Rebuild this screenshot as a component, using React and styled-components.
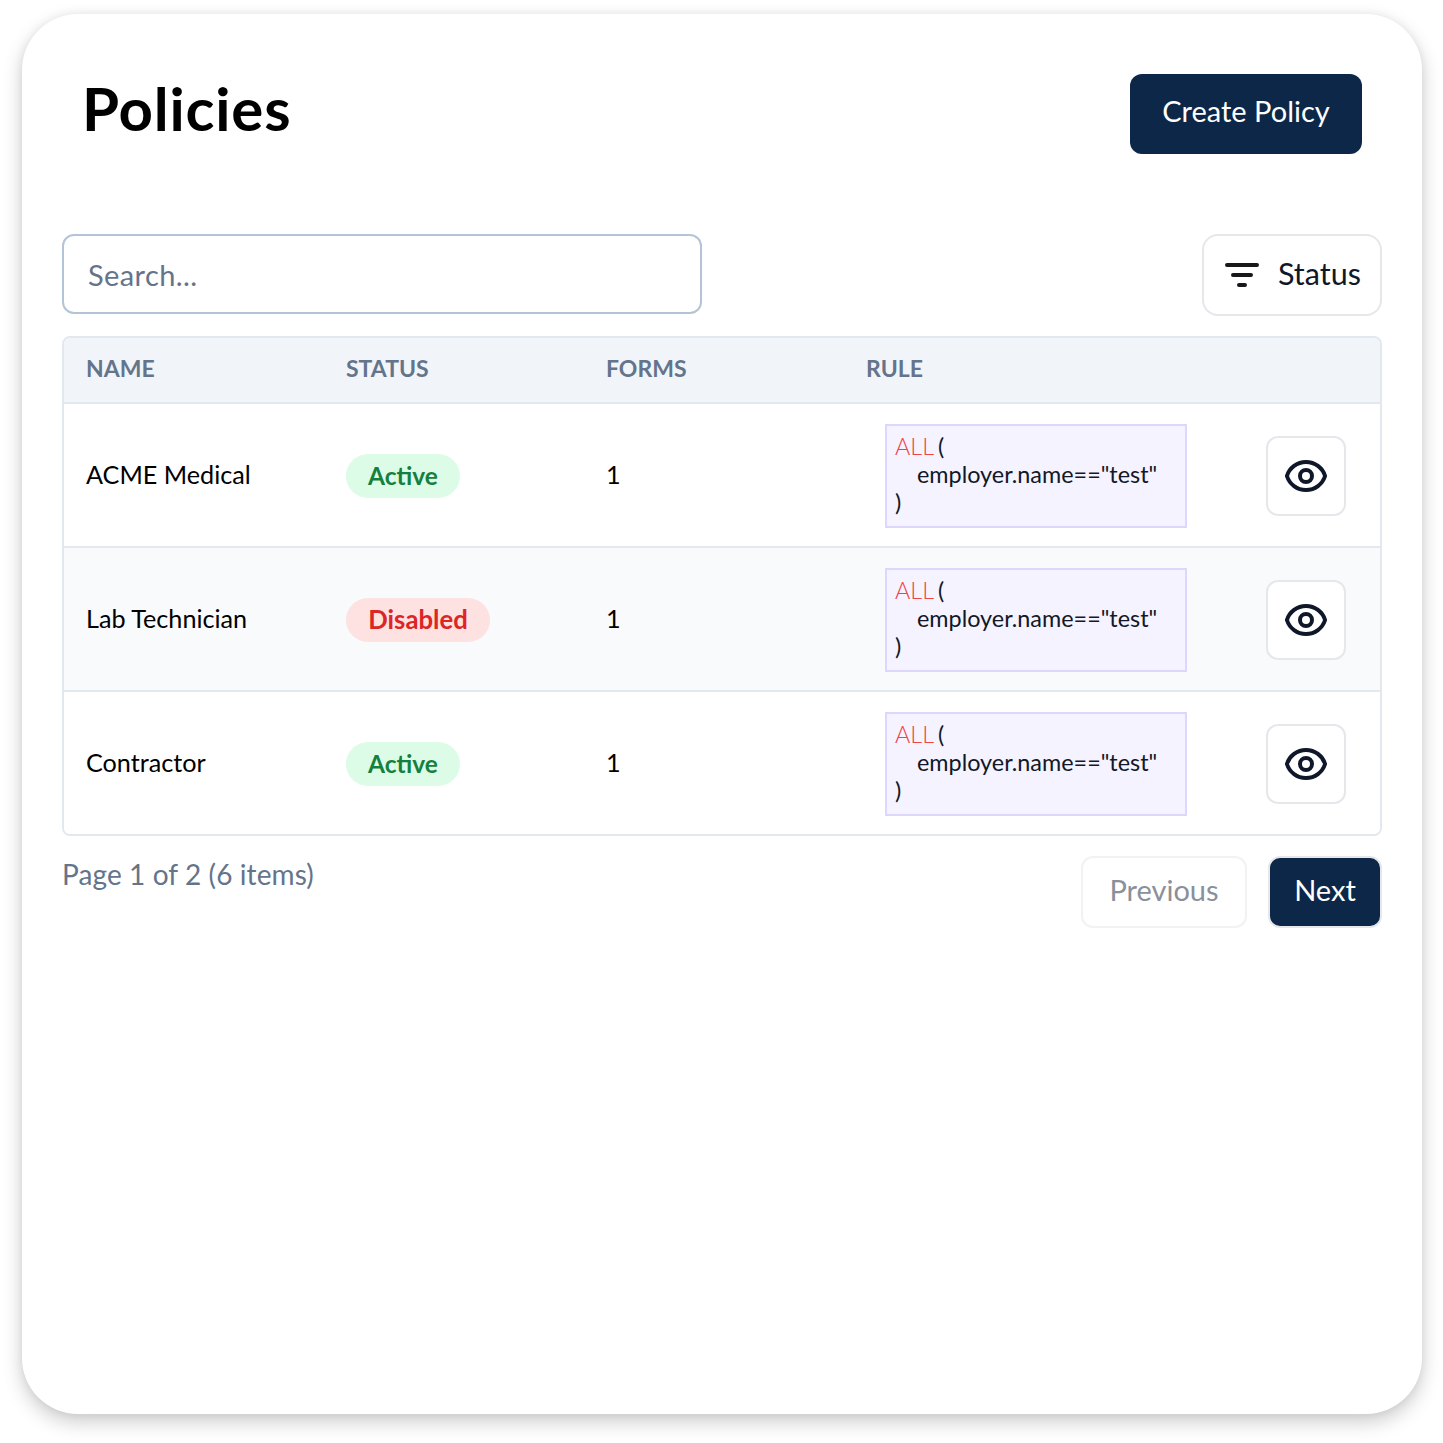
import React from "react";
import styled, { createGlobalStyle } from "styled-components";

const Global = createGlobalStyle`
  html, body { margin: 0; padding: 0; background: #fff; }
  body { font-family: "Lato", "Liberation Sans", sans-serif; color: #000; }
  * { box-sizing: border-box; }
`;

const Page = styled.div`
  width: 1443px;
  height: 1443px;
  padding: 14px 21px 29px 22px;
`;
const Card = styled.main`
  width: 1400px;
  height: 1400px;
  background: #fff;
  border-radius: 56px;
  padding: 60px 40px;
  box-shadow: 0 8px 20px rgba(0, 0, 0, 0.2), 0 0 10px rgba(0, 0, 0, 0.06);
`;
const Header = styled.header`
  display: flex;
  justify-content: space-between;
  align-items: flex-start;
  padding: 0 20px;
  height: 160px;
`;
const Title = styled.h1`
  margin: 0;
  font-size: 60px;
  line-height: 68px;
  font-weight: 700;
  letter-spacing: 0.8px;
`;
const PrimaryButton = styled.button`
  font: inherit;
  font-size: 29px;
  color: #fff;
  background: #0d2748;
  border: 0;
  border-radius: 12px;
  width: 232px;
  height: 80px;
  padding: 0 0 7px;
`;
const Toolbar = styled.div`
  display: flex;
  justify-content: space-between;
  align-items: flex-start;
  height: 102px;
`;
const Search = styled.input`
  width: 640px;
  height: 80px;
  border: 2px solid #b4c4d8;
  border-radius: 12px;
  padding: 0 24px;
  font: inherit;
  font-size: 29px;
  letter-spacing: 0.4px;
  outline: none;
  &::placeholder { color: #64748b; opacity: 1; }
`;
const FilterButton = styled.button`
  display: flex;
  align-items: center;
  gap: 19px;
  width: 180px;
  height: 82px;
  padding: 0 0 0 21px;
  background: #fff;
  border: 2px solid #e5e7eb;
  border-radius: 16px;
  font: inherit;
  font-size: 30.5px;
  color: #0f172a;
`;
const FilterLabel = styled.span`
  margin-bottom: 4px;
`;
const Table = styled.div`
  border: 2px solid #e2e8f0;
  border-radius: 8px;
  overflow: hidden;
`;
const rowGrid = `
  display: grid;
  grid-template-columns: 260px 260px 260px 1fr;
  padding-left: 22px;
`;
const HeadRow = styled.div`
  ${rowGrid}
  height: 66px;
  padding-bottom: 5px;
  align-items: center;
  background: #f1f5f9;
  border-bottom: 2px solid #e2e8f0;
`;
const HeadCell = styled.div`
  font-size: 23px;
  font-weight: 700;
  color: #64748b;
`;
const Row = styled.div`
  ${rowGrid}
  padding-top: 2px;
  align-items: center;
  background: ${(p) => (p.$alt ? "#f8fafc" : "#fff")};
  border-bottom: ${(p) => (p.$last ? "0" : "2px solid #e2e8f0")};
  height: ${(p) => (p.$last ? "142px" : "144px")};
`;
const Cell = styled.div`
  font-size: 25.2px;
  color: #000;
  margin-bottom: 4px;
`;
const BadgeCell = styled.div`
  display: flex;
`;
const Badge = styled.span`
  display: inline-flex;
  align-items: center;
  justify-content: center;
  height: 44px;
  padding-bottom: 2px;
  width: ${(p) => (p.$off ? "144px" : "114px")};
  border-radius: 22px;
  font-size: ${(p) => (p.$off ? "25.7px" : "24.5px")};
  font-weight: 700;
  background: ${(p) => (p.$off ? "#fee2e2" : "#dcfce7")};
  color: ${(p) => (p.$off ? "#dc2626" : "#15803d")};
`;
const RuleCell = styled.div`
  display: flex;
  justify-content: space-between;
  align-items: center;
  padding: 0 34px 0 19px;
`;
const RuleBox = styled.div`
  width: 302px;
  height: 104px;
  padding: 6px 8px;
  background: #f5f3ff;
  border: 2px solid #ddd6fe;
  font-size: 23.4px;
  line-height: 28px;
  color: #111827;
`;
const Keyword = styled.span`
  color: #ef4444;
  font-weight: 300;
  margin-right: -2px;
`;
const Indented = styled.div`
  padding-left: 22px;
`;
const IconButton = styled.button`
  display: flex;
  align-items: center;
  justify-content: center;
  width: 80px;
  height: 80px;
  padding: 0;
  background: #fff;
  border: 2px solid #e5e7eb;
  border-radius: 12px;
  color: #0f172a;
`;
const Footer = styled.div`
  display: flex;
  justify-content: space-between;
  align-items: flex-start;
  margin-top: 20px;
`;
const PageInfo = styled.div`
  font-size: 28px;
  line-height: 36px;
  color: #64748b;
  letter-spacing: 0.1px;
`;
const Pager = styled.div`
  display: flex;
  gap: 21px;
`;
const PagerButton = styled.button`
  height: 72px;
  padding: 0 0 5px;
  width: ${(p) => (p.$primary ? "114px" : "166px")};
  font: inherit;
  font-size: 29px;
  border-radius: 12px;
  border: 2px solid ${(p) => (p.$primary ? "#e5e7eb" : "#f1f2f4")};
  background: ${(p) => (p.$primary ? "#0d2748" : "#fff")};
  color: ${(p) => (p.$primary ? "#fff" : "#8a909b")};
`;

const EyeIcon = () => (
  <svg width="48" height="48" viewBox="0 0 24 24" fill="none" stroke="currentColor" strokeWidth="2" strokeLinecap="round" strokeLinejoin="round">
    <path d="M15 12a3 3 0 1 1-6 0 3 3 0 0 1 6 0z" />
    <path d="M2.458 12C3.732 7.943 7.523 5 12 5c4.478 0 8.268 2.943 9.542 7-1.274 4.057-5.064 7-9.542 7-4.477 0-8.268-2.943-9.542-7z" />
  </svg>
);
const FilterIcon = () => (
  <svg width="34" height="26" viewBox="0 0 34 26" fill="none" stroke="#18181b" strokeWidth="4" strokeLinecap="round">
    <path d="M2 3h30M8 13h18M14 23h6" />
  </svg>
);

const rows = [
  { name: "ACME Medical", status: "Active" },
  { name: "Lab Technician", status: "Disabled", alt: true },
  { name: "Contractor", status: "Active", last: true },
];

export default function App() {
  return (
    <Page>
      <Global />
      <Card>
        <Header>
          <Title>Policies</Title>
          <PrimaryButton>Create Policy</PrimaryButton>
        </Header>
        <Toolbar>
          <Search placeholder="Search..." />
          <FilterButton>
            <FilterIcon />
            <FilterLabel>Status</FilterLabel>
          </FilterButton>
        </Toolbar>
        <Table>
          <HeadRow>
            <HeadCell>NAME</HeadCell>
            <HeadCell>STATUS</HeadCell>
            <HeadCell>FORMS</HeadCell>
            <HeadCell>RULE</HeadCell>
          </HeadRow>
          {rows.map((r) => (
            <Row key={r.name} $alt={r.alt} $last={r.last}>
              <Cell>{r.name}</Cell>
              <BadgeCell>
                <Badge $off={r.status === "Disabled"}>{r.status}</Badge>
              </BadgeCell>
              <Cell>1</Cell>
              <RuleCell>
                <RuleBox>
                  <div><Keyword>ALL</Keyword> (</div>
                  <Indented>employer.name=="test"</Indented>
                  <div>)</div>
                </RuleBox>
                <IconButton aria-label="View"><EyeIcon /></IconButton>
              </RuleCell>
            </Row>
          ))}
        </Table>
        <Footer>
          <PageInfo>Page 1 of 2 (6 items)</PageInfo>
          <Pager>
            <PagerButton>Previous</PagerButton>
            <PagerButton $primary>Next</PagerButton>
          </Pager>
        </Footer>
      </Card>
    </Page>
  );
}
